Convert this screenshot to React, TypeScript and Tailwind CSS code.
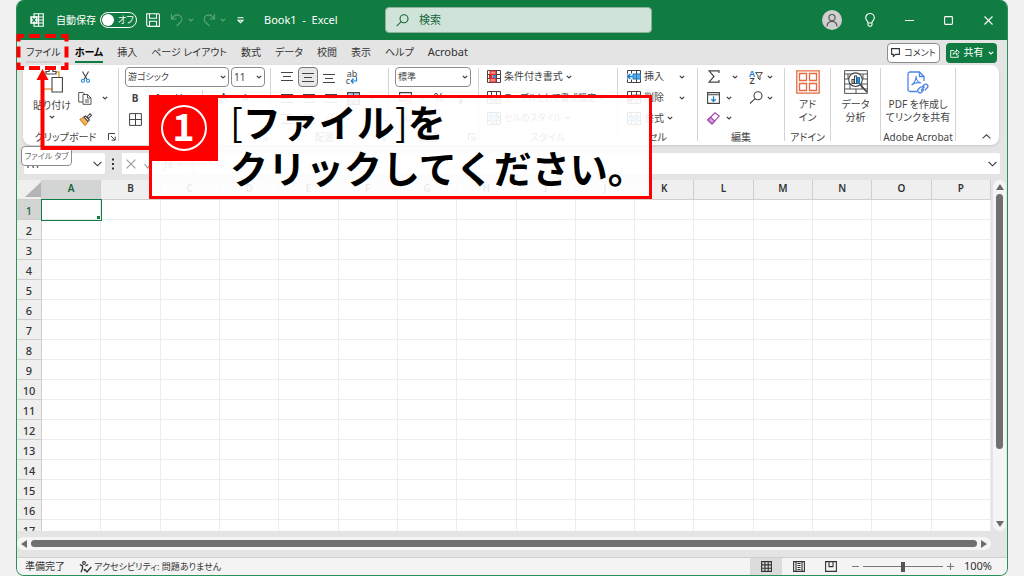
import React from "react";

const COLUMNS = ["A", "B", "C", "D", "E", "F", "G", "H", "I", "J", "K", "L", "M", "N", "O", "P"];
const ROWS = Array.from({ length: 17 }, (_, i) => i + 1);
const TABS = ["ファイル", "ホーム", "挿入", "ページ レイアウト", "数式", "データ", "校閲", "表示", "ヘルプ", "Acrobat"];

type SvgProps = { w: number; h: number; className?: string; children: React.ReactNode };

function Svg({ w, h, className = "", children }: SvgProps) {
  return (
    <svg
      width={w}
      height={h}
      viewBox={`0 0 ${w} ${h}`}
      fill="none"
      stroke="currentColor"
      strokeWidth="1.1"
      aria-hidden="true"
      className={`shrink-0 ${className}`}
    >
      {children}
    </svg>
  );
}

function Chevron({ className = "" }: { className?: string }) {
  return (
    <Svg w={6} h={4} className={className}>
      <path d="M.8.8 3 3 5.2.8" strokeWidth="1.2" />
    </Svg>
  );
}

type ToolProps = { label: string; className?: string; children: React.ReactNode };

function Tool({ label, className = "w-[22px]", children }: ToolProps) {
  return (
    <button type="button" aria-label={label} className={`flex h-5 shrink-0 items-center justify-center ${className}`}>
      {children}
    </button>
  );
}

type GroupProps = { label: string; launcher?: boolean; className: string; children: React.ReactNode };

function Group({ label, launcher, className, children }: GroupProps) {
  return (
    <section aria-label={label || undefined} className={`flex shrink-0 ${className}`}>
      <div className="flex min-w-0 flex-1 flex-col">
        <div className="flex h-[62px] flex-col">{children}</div>
        <div className="flex h-4 items-center text-[10px]">
          <span className="flex-1 text-center whitespace-nowrap">{label}</span>
          {launcher && (
            <button type="button" aria-label={`${label}の設定`} className="mr-0.5">
              <Svg w={8} h={8}>
                <path d="M.5 7V.5H7M3 3l4 4M7.2 3.6v3.6H3.6" strokeWidth="1" />
              </Svg>
            </button>
          )}
        </div>
      </div>
      <div className="mt-px mb-1 w-px bg-[#d4d4d4]" />
    </section>
  );
}

function Row({ className = "", children }: { className?: string; children: React.ReactNode }) {
  return <div className={`mb-px flex h-5 items-center ${className}`}>{children}</div>;
}

function Picker({ label, value, className }: { label: string; value: string; className: string }) {
  return (
    <div className={`grid h-5 shrink-0 items-center ${className}`}>
      <select
        aria-label={label}
        defaultValue={value}
        className="col-start-1 row-start-1 h-5 w-full appearance-none rounded border border-[#8c8c8c] bg-white px-[2px]"
      >
        <option>{value}</option>
      </select>
      <Chevron className="pointer-events-none col-start-1 row-start-1 mr-[3px] justify-self-end" />
    </div>
  );
}

function Lines({ d }: { d: string }) {
  return (
    <Svg w={12} h={12}>
      <path d={d} strokeWidth="1" />
    </Svg>
  );
}

function GridIcon({ kind }: { kind: "cond" | "table" | "style" | "insert" | "delete" | "format" }) {
  return (
    <Svg w={14} h={13}>
      <path d="M.5.5h13v12H.5zM.5 4.5h13M.5 8.5h13M4.500.5v12M9.500.5v12" strokeWidth="1" />
      {kind === "cond" && (
        <>
          <path d="M3 1h6v3.500H3zM3 8.500h6V12H3z" fill="#f28b82" stroke="#d92c2c" />
          <path d="M2.500 4.500h2.500v4H2.500z" fill="#d92c2c" stroke="#d92c2c" />
          <path d="M6 5h3v3H6z" fill="#2f8fd8" stroke="none" />
        </>
      )}
      {kind === "table" && <path d="M6 12 12 5l1.500 1.500-5 6z" fill="#7cbcec" stroke="#2f8fd8" />}
      {kind === "style" && <path d="M3 3h8v6H3zM6 12l7-7" fill="#8ec7ef" stroke="#2f8fd8" />}
      {kind === "insert" && (
        <>
          <path d="M6 4h7.500v5H6zM9.500 4v5" fill="#5aaee8" stroke="#1f77bd" />
          <path d="M.5 3.500h5v6h-5z" fill="#fff" stroke="none" />
          <path d="M6 6.500H.8M3.200 4 .8 6.500 3.200 9" stroke="#1681d5" strokeWidth="1.400" />
        </>
      )}
      {kind === "delete" && (
        <>
          <path d="M6 4h7v4H6z" fill="#fff" stroke="#777" />
          <path d="m1 7 4 4M5 7l-4 4" stroke="#d92c2c" />
        </>
      )}
      {kind === "format" && <path d="M3 4h8v5H3z" fill="#6db7ee" stroke="#2f8fd8" />}
    </Svg>
  );
}

function TitleBar() {
  return (
    <header className="flex h-10 shrink-0 items-center bg-[#107c41] text-white">
      <div className="flex w-[368px] shrink-0 items-center pl-[13px]">
        <Svg w={14} h={14}>
          <path d="M4 .7h9.300v12.600H4zM4 4h9M4 7h9M4 10h9M8.600.7v12.600" />
          <path d="M.3 3.300h7.200v7.400H.3z" fill="#fff" stroke="none" />
          <path d="m2.200 4.800 3.500 4.400M5.700 4.800 2.200 9.200" stroke="#107c41" strokeWidth="1.300" />
        </Svg>
        <span className="ml-3 w-11 text-[10px] whitespace-nowrap">自動保存</span>
        <button
          type="button"
          role="switch"
          aria-checked="false"
          aria-label="自動保存"
          className="flex h-4 w-[37px] items-center gap-1 rounded-full border border-white pl-px text-[9px]"
        >
          <span className="size-3 rounded-full bg-white" />
          <span>オフ</span>
        </button>
        <button type="button" aria-label="上書き保存" className="ml-[9px]">
          <Svg w={14} h={14}>
            <path d="M.7.7h12l.7.7v12H2L.7 12zM3.500.7v4.500h7V.7M3.500 13V8.300h7V13" />
          </Svg>
        </button>
        <button type="button" aria-label="元に戻す" className="ml-2.5 flex items-center gap-1 text-[#5ba37b]">
          <Svg w={14} h={14}>
            <path d="M1.500 1v5h5M1.800 5.800C4 2.500 7 1.200 9.500 2.500c3 1.600 3 5 .8 7L6.500 13" />
          </Svg>
          <Chevron />
        </button>
        <button type="button" aria-label="やり直し" className="ml-2 flex items-center gap-1 text-[#5ba37b]">
          <Svg w={14} h={14}>
            <path d="M12.500 1v5h-5M12.200 5.800C10 2.500 7 1.200 4.500 2.500c-3 1.600-3 5-.8 7L7.500 13" />
          </Svg>
          <Chevron />
        </button>
        <button type="button" aria-label="クイック アクセス ツール バーのカスタマイズ" className="ml-[11px]">
          <Svg w={7} h={7}>
            <path d="M.5.700h6M1 3.200h5L3.500 5.700z" />
          </Svg>
        </button>
        <h1 className="ml-5 text-[11px] whitespace-pre">Book1  -  Excel</h1>
      </div>
      <label className="flex h-[26px] w-[267px] shrink-0 items-center rounded-sm border border-[#8fae9c] bg-[#cfe3d8] pl-2.5 text-[#17653a]">
        <Svg w={13} h={13}>
          <circle cx="8" cy="4.800" r="4" />
          <path d="M5.200 7.700.7 12.200" />
        </Svg>
        <input
          type="text"
          aria-label="検索"
          placeholder="検索"
          className="ml-2.5 min-w-0 flex-1 bg-transparent text-[11px] outline-none placeholder:text-[#17653a]"
        />
      </label>
      <div className="ml-auto flex items-center">
        <button type="button" aria-label="アカウント" className="flex size-5 items-center justify-center rounded-full bg-[#cfcfcf] text-[#555]">
          <Svg w={14} h={14}>
            <circle cx="7" cy="4.600" r="3.100" />
            <path d="M2 13.500c0-3.300 2-5 5-5s5 1.700 5 5" />
          </Svg>
        </button>
        <button type="button" aria-label="ヒント" className="flex w-14 justify-center">
          <Svg w={12} h={14}>
            <path d="M4 9.600C4 8 1.700 7.500 1.700 4.800a4.300 4.300 0 0 1 8.600 0C10.300 7.500 8 8 8 9.600v2.300L7 13.300H5L4 11.900zM4 10h4" />
          </Svg>
        </button>
        <button type="button" aria-label="最小化" className="flex w-[22px] justify-center">
          <Svg w={9} h={9}>
            <path d="M0 4.500h9" />
          </Svg>
        </button>
        <button type="button" aria-label="最大化" className="flex w-[57px] justify-center">
          <Svg w={9} h={9}>
            <rect x=".6" y=".6" width="7.800" height="7.800" rx=".8" />
          </Svg>
        </button>
        <button type="button" aria-label="閉じる" className="mr-2 flex w-[22px] justify-center">
          <Svg w={9} h={9}>
            <path d="m.5.5 8 8M8.500.5l-8 8" />
          </Svg>
        </button>
      </div>
    </header>
  );
}

function TabBar() {
  return (
    <nav aria-label="リボン タブ" className="flex h-[25px] shrink-0 items-center pl-[9px]">
      <div className="flex flex-1 items-center gap-3.5">
        {TABS.map((tab) => (
          <button
            key={tab}
            type="button"
            className={`h-5 border-b-2 leading-4 whitespace-nowrap ${
              tab === "ホーム"
                ? "border-[#107c41] text-[10px] font-bold text-black"
                : tab === "ファイル"
                  ? "border-[#cfcfcf] text-[10px]"
                  : tab === "Acrobat"
                    ? "border-transparent text-[11px]"
                    : "border-transparent text-[10px]"
            }`}
          >
            {tab}
          </button>
        ))}
      </div>
      <button type="button" className="flex h-5 w-[53px] items-center justify-center gap-1 rounded border border-[#8c8c8c] bg-white text-[9px]">
        <Svg w={9} h={9}>
          <path d="M.6.6h7.800v5.800H4.500L2.300 8.500V6.400H.6z" />
        </Svg>
        コメント
      </button>
      <button type="button" className="mr-2.5 ml-1.5 flex h-5 w-[51px] items-center justify-center gap-1 rounded bg-[#107c41] text-[10px] text-white">
        <Svg w={10} h={10}>
          <path d="M4 2.500H.7v6.800h7.500V7M3 6.500c.3-2 1.500-3 3.500-3V1.600L9.300 4.300 6.500 7V5.200C5 5.200 4 5.500 3 6.500z" strokeWidth=".9" />
        </Svg>
        共有
        <Chevron />
      </button>
    </nav>
  );
}

function Ribbon() {
  return (
    <div className="mr-2 ml-1.5 flex h-20 shrink-0 overflow-hidden rounded-lg bg-white pt-0.5 text-[10px] text-[#444] shadow-sm">
      <Group label="クリップボード" launcher className="w-24">
        <div className="flex h-full">
          <button type="button" className="flex w-[54px] flex-col items-center pl-1 text-[10px] leading-3">
            <Svg w={22} h={26}>
              <path d="M2 5h16v17H2z" stroke="#e8a33d" strokeWidth="1.600" />
              <path d="M5 7V4.500h3C8 1 12 1 12 4.500h3V7z" fill="#fff" />
              <path d="M11 10.500h10.400V25H11z" fill="#fff" />
            </Svg>
            <span className="mt-1.5 whitespace-nowrap">貼り付け</span>
            <Chevron className="mt-1" />
          </button>
          <div className="flex flex-col">
            <Row>
              <Tool label="切り取り" className="w-4">
                <Svg w={9} h={12}>
                  <path d="M1.500.5 6 8.500M7.500.5 3 8.500" />
                  <circle cx="2" cy="9.800" r="1.500" stroke="#2f8fd8" />
                  <circle cx="7" cy="9.800" r="1.500" stroke="#2f8fd8" />
                </Svg>
              </Tool>
            </Row>
            <Row>
              <Tool label="コピー" className="w-4">
                <Svg w={14} h={14}>
                  <path d="M5 11H.7V1.500h4.500L6.500 3M5 3.500h4.500L13 7v6.300H5zM9.500 3.500V7H13M7 9h4M7 11h4" strokeWidth=".9" />
                </Svg>
              </Tool>
              <Tool label="コピーのオプション" className="w-6">
                <Chevron />
              </Tool>
            </Row>
            <Row>
              <Tool label="書式のコピー" className="w-4">
                <Svg w={13} h={13}>
                  <path d="M1 6.500 5 4l4 4.500-3 4z" fill="#f5b55c" stroke="#d9822b" />
                  <path d="m5 4 1.500-1 4 4L9 8.500zM8 4l3-3.300 1.500 1.500L9.500 5.500z" fill="#fff" />
                </Svg>
              </Tool>
            </Row>
          </div>
        </div>
      </Group>

      <Group label="フォント" launcher className="w-[152px]">
        <Row className="gap-0.5 pl-1.5">
          <Picker label="フォント名" value="游ゴシック" className="w-[104px] text-[9px]" />
          <Picker label="フォント サイズ" value="11" className="w-[34px]" />
        </Row>
        <Row className="pl-[5px]">
          <Tool label="太字"><b>B</b></Tool>
          <Tool label="斜体"><i>I</i></Tool>
          <Tool label="下線"><u>U</u></Tool>
          <span className="mx-3 h-4 w-px bg-[#d4d4d4]" />
          <Tool label="拡大">
            <span className="text-xs">A</span>
            <Svg w={5} h={8}><path d="M.6 3.500 2.500 1.500 4.400 3.500" stroke="#1681d5" /></Svg>
          </Tool>
          <Tool label="縮小">
            A
            <Svg w={5} h={8}><path d="M.6 1.500 2.500 3.500 4.400 1.500" stroke="#1681d5" /></Svg>
          </Tool>
        </Row>
        <Row className="pl-[5px]">
          <Tool label="罫線">
            <Svg w={13} h={13}><path d="M.6.6h11.800v11.800H.6zM6.500.6v11.800M.6 6.500h11.800" strokeWidth="1" /></Svg>
          </Tool>
        </Row>
      </Group>

      <Group label="配置" launcher className="w-[118px]">
        <Row className="pl-[5px]">
          <Tool label="上揃え"><Lines d="M0 1.500h12M2 5.500h8M0 9.500h12" /></Tool>
          <Tool label="上下中央揃え" className="w-5 rounded border border-[#777] bg-[#e8e8e8]">
            <Lines d="M0 2.500h12M2 6.500h8M0 10.500h12" />
          </Tool>
          <Tool label="下揃え"><Lines d="M0 3.500h12M2 7.500h8M0 11.500h12" /></Tool>
          <Tool label="折り返して全体を表示する" className="w-6">
            <span className="flex flex-col text-[9px] leading-[7px]">
              <span>ab</span>
              <span className="flex items-center">
                c
                <Svg w={8} h={7}>
                  <path d="M6.500 0v4H1.500M3.500 1.500 1.200 4l2.300 2.500" stroke="#1681d5" strokeWidth="1.200" />
                </Svg>
              </span>
            </span>
          </Tool>
        </Row>
        <Row className="pl-[5px]">
          <Tool label="左揃え"><Lines d="M0 2.500h12M0 6.500h8M0 10.500h12" /></Tool>
          <Tool label="中央揃え"><Lines d="M0 2.500h12M2 6.500h8M0 10.500h12" /></Tool>
          <Tool label="右揃え"><Lines d="M0 2.500h12M4 6.500h8M0 10.500h12" /></Tool>
          <Tool label="セルを結合して中央揃え">
            <Svg w={13} h={13}>
              <path d="M.6.6h11.800v11.800H.6z" fill="#a6d3f3" />
              <path d="M.6 4h11.800M.6 9h11.800M6.500.6V4M6.500 9v3" />
            </Svg>
          </Tool>
          <Tool label="結合のオプション" className="w-4"><Chevron /></Tool>
        </Row>
        <Row className="pl-[5px]">
          <Tool label="インデントを減らす"><Lines d="M0 1.500h12M6 5.500h6M0 10.500h12" /></Tool>
          <Tool label="インデントを増やす"><Lines d="M0 1.500h12M6 5.500h6M0 10.500h12" /></Tool>
          <Tool label="方向"><span className="text-[9px]">ab</span></Tool>
          <Tool label="方向のオプション" className="w-3"><Chevron /></Tool>
        </Row>
      </Group>

      <Group label="数値" launcher className="w-[90px]">
        <Row className="pl-1.5">
          <Picker label="表示形式" value="標準" className="w-[76px] text-[9px]" />
        </Row>
        <Row className="pl-[5px]">
          <Tool label="通貨表示形式">
            <Svg w={13} h={12}>
              <path d="M.6.6h11.800v8H.6z" />
              <path d="M7 6h6v5H7z" fill="#f7c7a8" stroke="#e68a4f" />
            </Svg>
          </Tool>
          <Tool label="通貨のオプション" className="w-3"><Chevron /></Tool>
          <Tool label="パーセント"><span className="text-[13px]">%</span></Tool>
          <Tool label="桁区切り"><b className="pb-2 text-xl leading-none">,</b></Tool>
        </Row>
        <Row className="pl-[5px]">
          <Tool label="小数点以下の桁数を増やす"><span className="text-[8px]">.00</span></Tool>
          <Tool label="小数点以下の桁数を減らす"><span className="text-[8px]">.0</span></Tool>
        </Row>
      </Group>

      <Group label="スタイル" className="w-[139px]">
        {(
          [
            ["cond", "条件付き書式"],
            ["table", "テーブルとして書式設定"],
            ["style", "セルのスタイル"],
          ] as const
        ).map(([kind, text]) => (
          <Row key={kind} className="pl-2">
            <button
              type="button"
              className={`flex items-center gap-[3px] whitespace-nowrap ${kind === "cond" ? "text-[10px]" : "text-[9px]"}`}
            >
              <GridIcon kind={kind} />
              {text}
              <Chevron />
            </button>
          </Row>
        ))}
      </Group>

      <Group label="セル" className="w-20">
        {(
          [
            ["insert", "挿入"],
            ["delete", "削除"],
            ["format", "書式"],
          ] as const
        ).map(([kind, text]) => (
          <Row key={kind} className="pl-[9px]">
            <button
              type="button"
              className={`flex items-center gap-[3px] whitespace-nowrap ${kind === "format" ? "" : "w-[58px]"}`}
            >
              <GridIcon kind={kind} />
              {text}
              <Chevron className={kind === "format" ? "" : "ml-auto"} />
            </button>
          </Row>
        ))}
      </Group>

      <Group label="編集" className="w-[87px]">
        <Row className="justify-between pr-[11px] pl-2.5">
          <button type="button" aria-label="合計" className="flex items-center gap-3">
            <Svg w={12} h={13}>
              <path d="M11 3V.8H1l5 5.700-5 5.700h10V10" strokeWidth="1.200" />
            </Svg>
            <Chevron />
          </button>
          <button type="button" aria-label="並べ替えとフィルター" className="flex items-center">
            <span className="flex flex-col text-[9px] leading-[7px] font-semibold">
              <span className="text-[#1681d5]">A</span>
              <span>Z</span>
            </span>
            <Svg w={8} h={9} className="mr-1">
              <path d="M.6.6h6.800L5 3.800v3.900L3 6.200V3.800z" strokeWidth="1" />
            </Svg>
            <Chevron />
          </button>
        </Row>
        <Row className="justify-between pr-[11px] pl-[9px]">
          <button type="button" aria-label="フィル" className="flex items-center gap-1.5">
            <Svg w={13} h={12}>
              <path d="M.6.6h11.800v10.800H.6zM.6 2.800h11.800" />
              <path d="M6.500 4.200v5M4.300 7.200l2.200 2.200 2.200-2.200" stroke="#1681d5" strokeWidth="1.300" />
            </Svg>
            <Chevron />
          </button>
          <button type="button" aria-label="検索と選択" className="flex items-center gap-1">
            <Svg w={14} h={13}>
              <circle cx="9" cy="4.800" r="4" />
              <path d="M6.200 7.700 1 12.500" />
            </Svg>
            <Chevron />
          </button>
        </Row>
        <Row className="pl-[9px]">
          <button type="button" aria-label="クリア" className="flex items-center gap-1.5 text-[#a43fae]">
            <Svg w={13} h={13}>
              <path d="M.8 8 8 .8 12.200 4 5 12z" />
              <path d="M.8 8 3.500 5.300 7.800 9 5 12z" fill="#d7a4dc" />
            </Svg>
            <Chevron className="text-[#444]" />
          </button>
        </Row>
      </Group>

      <Group label="アドイン" className="w-[46px]">
        <button type="button" className="flex h-full flex-col items-center gap-1 pt-[3px] leading-[13px]">
          <Svg w={24} h={24} className="text-[#e8683f]">
            <path d="M.8.8h22.400v22.400H.8zM3.500 3.500h7v7h-7zM13.500 3.500h7v7h-7zM3.500 13.500h7v7h-7zM13.500 13.500h7v7h-7z" strokeWidth="1.300" />
          </Svg>
          <span>アド<br />イン</span>
        </button>
      </Group>

      <Group label="" className="w-[50px]">
        <button type="button" className="flex h-full flex-col items-center gap-1 pt-[3px] leading-[13px]">
          <Svg w={24} h={24}>
            <path d="M.6.6h22.800v22.800H.6zM.6 4h22.800M.6 9h22.800M.6 14h22.800M.6 19h22.800M6 14v5M12 19v4M18 14v5M4 4v5M19 4v5" strokeWidth=".9" />
            <circle cx="11.500" cy="9.700" r="6.800" fill="#fff" />
            <path d="M8 9.500h2v4H8zM10.500 6h2v7.500h-2z" />
            <path d="M13 7.500h2.500v6H13z" fill="#2f8fd8" stroke="#1f77bd" />
            <path d="m16.500 15 6.500 7" strokeWidth="1.800" />
          </Svg>
          <span>データ<br />分析</span>
        </button>
      </Group>

      <Group label="Adobe Acrobat" className="w-[75px]">
        <button type="button" className="flex h-full flex-col items-center gap-1 pt-[3px] leading-[13px] whitespace-nowrap">
          <Svg w={22} h={24} className="text-[#4c83e8]">
            <path d="M10 21.500H3a2 2 0 0 1-2-2V4a2 2 0 0 1 2-2h9.500l4.500 4.500V11M12.500 2v4.500H17" strokeWidth="1.300" />
            <path d="M4.500 15c3-2 5-6 4.500-9 .3 4 2.300 6.500 5 7-3-.8-6.500-.2-9.500 2z" />
            <path d="m14.500 15.500 2.700-2.700c2-1.800 5 .8 3 3l-2.400 2.400M17 17.500l-2.500 2.700c-2 2-5-.8-3.200-3l2.500-2.500M14 18.500l3.500-4" strokeWidth="1.300" transform="translate(0 2)" />
          </Svg>
          <span>PDF を作成し<br />てリンクを共有</span>
        </button>
      </Group>

      <div className="flex flex-1 items-end justify-end pr-2 pb-1.5">
        <button type="button" aria-label="リボンを折りたたむ">
          <Svg w={9} h={5}><path d="M.6 4.400 4.500.8l3.900 3.600" /></Svg>
        </button>
      </div>
    </div>
  );
}

function FormulaBar() {
  return (
    <div className="mt-2 mr-[7px] mb-1.5 ml-[7px] flex h-[21px] shrink-0 items-center text-[10px]">
      <div className="flex h-full w-[81px] shrink-0 items-center rounded-xs bg-white pr-[3px] pl-[3px]">
        <input type="text" aria-label="名前ボックス" defaultValue="A1" className="w-full min-w-0 pt-0.5 text-[11px] outline-none" />
        <Svg w={9} h={6}><path d="m.6.8 3.900 4 3.900-4" /></Svg>
      </div>
      <Svg w={3} h={12} className="mx-[7px]">
        <path d="M0 1.500h2M0 6h2M0 10.500h2" strokeWidth="2" />
      </Svg>
      <div className="flex h-full w-[69px] shrink-0 items-center bg-white pl-1 text-[#999]">
        <Svg w={10} h={10}><path d="m.6.6 8.800 8.800M9.400.6.6 9.400" /></Svg>
        <Svg w={10} h={10} className="ml-2"><path d="m.6 5 3 4 5.800-8" /></Svg>
        <i className="ml-2.5 font-serif text-xs text-[#555]">fx</i>
        <Chevron className="ml-1" />
      </div>
      <div className="ml-1 flex h-full flex-1 items-center rounded-xs bg-white pr-[3px]">
        <input type="text" aria-label="数式バー" className="min-w-0 flex-1 outline-none" />
        <Svg w={9} h={6}><path d="m.6.8 3.900 4 3.900-4" /></Svg>
      </div>
    </div>
  );
}

function Sheet() {
  return (
    <div className="flex min-h-0 flex-1">
      <div className="min-h-0 flex-1 overflow-hidden bg-white">
        <table className="w-full table-fixed border-separate border-spacing-0 text-[10px] leading-3">
          <thead>
            <tr className="h-5 bg-[#efefef]">
              <th className="w-[25px] border-r border-b border-[#cfcfcf] p-0" aria-label="すべて選択">
                <Svg w={16} h={15} className="ml-auto"><path d="M16 0v15H0z" fill="#b4b4b4" stroke="none" /></Svg>
              </th>
              {COLUMNS.map((c) => (
                <th
                  key={c}
                  scope="col"
                  className={`border-r border-b p-0 pb-1 font-semibold ${
                    c === "A" ? "border-[#107c41] border-r-[#cfcfcf] bg-[#d3d5d4] text-[#17653a]" : "border-[#cfcfcf]"
                  }`}
                >
                  {c}
                </th>
              ))}
            </tr>
          </thead>
          <tbody>
            {ROWS.map((r) => (
              <tr key={r} className="h-5">
                <th
                  scope="row"
                  className={`border-r border-b border-[#cfcfcf] p-0 pt-0.5 text-[11px] font-medium ${
                    r === 1 ? "bg-[#d3d5d4] text-[#17653a]" : "bg-[#efefef]"
                  }`}
                >
                  {r}
                </th>
                {COLUMNS.map((c) => (
                  <td
                    key={c}
                    className={`border-r border-b border-[#ececec] p-0 ${
                      r === 1 && c === "A" ? "outline outline-[#107c41]" : ""
                    }`}
                  >
                    {r === 1 && c === "A" && (
                      <div className="flex h-[19px] items-end justify-end">
                        <span className="size-[3px] bg-[#107c41]" />
                      </div>
                    )}
                  </td>
                ))}
              </tr>
            ))}
          </tbody>
        </table>
      </div>
      <div className="mr-px ml-0.5 flex w-[13px] shrink-0 flex-col items-center rounded-full bg-[#f5f5f5] py-1 text-[#6b6b6b]">
        <Svg w={8} h={6}><path d="M4 0 8 6H0z" fill="currentColor" stroke="none" /></Svg>
        <div className="mt-1 flex w-full flex-1 flex-col items-center">
          <div className="h-[78%] w-[7px] rounded-full bg-[#707070]" />
        </div>
        <Svg w={8} h={6}><path d="M0 0h8L4 6z" fill="currentColor" stroke="none" /></Svg>
      </div>
    </div>
  );
}

function BottomBars() {
  return (
    <>
      <div className="mt-1.5 mr-4 mb-[7px] flex h-[13px] shrink-0 items-center gap-1 rounded-full bg-[#f5f5f5] px-1 text-[#6b6b6b]">
        <Svg w={6} h={8}><path d="M0 4 6 0v8z" fill="currentColor" stroke="none" /></Svg>
        <div className="h-[7px] flex-1 rounded-full bg-[#707070]" />
        <Svg w={6} h={8}><path d="M6 4 0 0v8z" fill="currentColor" stroke="none" /></Svg>
      </div>
      <footer className="flex h-[18px] shrink-0 items-center border-t border-[#d0d0d0] bg-[#f4f4f4] text-[10px]">
        <span className="ml-2">準備完了</span>
        <Svg w={13} h={12} className="ml-3.5">
          <circle cx="5" cy="2" r="1.400" />
          <path d="M.8 3.500 3.500 5v2.500L2 11.300M9.200 3.500 6.500 5M5 8 6 10" strokeWidth="1.300" />
          <path d="m6 8.500 2 2.500 4.300-5" strokeWidth="1.300" />
        </Svg>
        <span className="ml-0.5 text-[9px]">アクセシビリティ: 問題ありません</span>
        <div className="ml-auto flex h-full items-center">
          <button type="button" aria-label="標準" className="flex h-full w-8 items-center justify-center bg-[#dcdcdc]">
            <Svg w={11} h={11}><path d="M.6.6h9.800v9.800H.6zM.6 3.900h9.800M.6 7.200h9.800M3.900.6v9.800M7.200.6v9.800" /></Svg>
          </button>
          <button type="button" aria-label="ページ レイアウト" className="flex h-full w-[33px] items-center justify-center">
            <Svg w={12} h={11}><path d="M.6.6h10.800v9.800H.6zM3 .6v9.800M9 .6v9.800M4.500 2.500h3M4.500 4.500h3M4.500 6.500h3M4.500 8.500h3" /></Svg>
          </button>
          <button type="button" aria-label="改ページ プレビュー" className="flex h-full w-8 items-center justify-center">
            <Svg w={12} h={11}><path d="M.6.6h10.800v9.800H.6zM4 .6v5h4v-5" /></Svg>
          </button>
          <button type="button" aria-label="縮小" className="ml-[5px] text-[#777]">
            <Svg w={7} h={7}><path d="M0 3.500h7" /></Svg>
          </button>
          <input
            type="range"
            aria-label="ズーム"
            min={0}
            max={100}
            defaultValue={50}
            className="mx-1 h-2.5 w-20 appearance-none bg-[linear-gradient(#777,#777)] bg-[length:100%_1px] bg-center bg-no-repeat [&::-webkit-slider-thumb]:h-2.5 [&::-webkit-slider-thumb]:w-1 [&::-webkit-slider-thumb]:appearance-none [&::-webkit-slider-thumb]:bg-[#555]"
          />
          <button type="button" aria-label="拡大" className="text-[#777]">
            <Svg w={7} h={7}><path d="M0 3.500h7M3.500 0v7" /></Svg>
          </button>
          <span className="mr-[15px] w-[38px] text-right text-[11px]">100%</span>
        </div>
      </footer>
    </>
  );
}

export default function App() {
  return (
    <div className="relative flex h-screen flex-col bg-[#f1f1f1] px-4 font-['Noto_Sans','Noto_Sans_CJK_JP',sans-serif] text-[#333] [font-feature-settings:'palt']">
      <main className="flex min-h-0 flex-1 flex-col overflow-hidden rounded-lg border border-t-0 border-[#2b9159] bg-[#e4e4e4]">
        <TitleBar />
        <TabBar />
        <Ribbon />
        <FormulaBar />
        <Sheet />
        <BottomBars />
      </main>

      <div role="tooltip" className="absolute top-[146px] left-[21px] flex h-5 w-[51px] items-center justify-center rounded border border-[#8c8c8c] bg-white text-[8px] whitespace-nowrap text-[#666]">
        ファイル タブ
      </div>

      <svg width="160" height="170" viewBox="0 0 160 170" fill="none" stroke="#f00" aria-hidden="true" className="pointer-events-none absolute top-0 left-0">
        <rect x="18.500" y="36" width="48" height="32" strokeWidth="4" strokeDasharray="11 5" strokeDashoffset="5.500" />
        <path d="M42.500 76v72H152" strokeWidth="4" />
        <path d="m42.500 69 6 11h-12z" fill="#f00" stroke="none" />
      </svg>

      <aside className="absolute top-[95px] left-[149px] flex w-[503px] border-[3px] border-[#f00] bg-white/90 pb-[6px]">
        <div className="-mt-[3px] -ml-[3px] flex h-[66px] w-[69px] shrink-0 items-center justify-center bg-[#f00] text-white">
          <span className="flex size-[46px] items-center justify-center rounded-full border-2 border-white pb-1.5 font-['Noto_Sans_CJK_JP',sans-serif] text-[38px] leading-none font-bold">
            1
          </span>
        </div>
        <p className="ml-3 font-['Noto_Sans_CJK_JP',sans-serif] text-[38px] leading-[46px] font-bold whitespace-nowrap text-black [font-feature-settings:normal]">
          <span className="font-normal">[</span>ファイル<span className="font-normal">]</span>を
          <br />
          クリックしてください。
        </p>
      </aside>
    </div>
  );
}
